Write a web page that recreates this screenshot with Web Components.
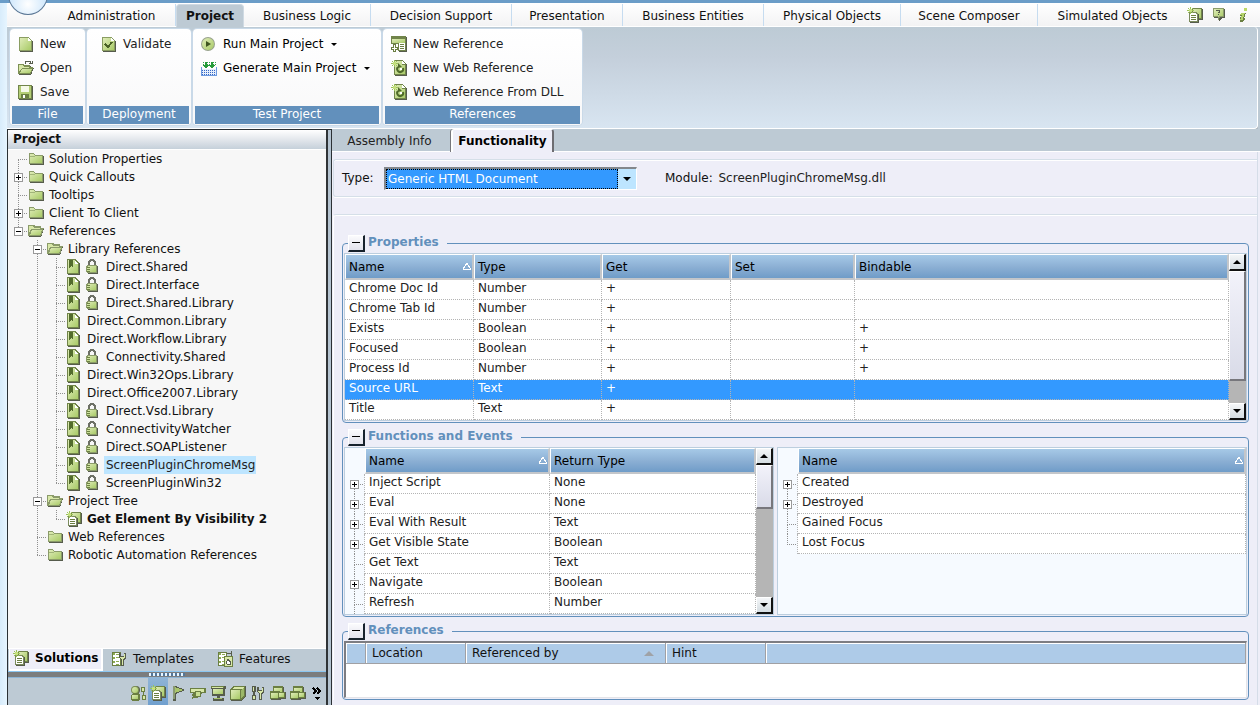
<!DOCTYPE html>
<html lang="en">
<head>
<meta charset="utf-8">
<title>Project designer</title>
<style>
    :root {
        --bar: #bdcad4;
        --blue: #6290bc;
        --pane: #eeeef8;
    }
    * { box-sizing: border-box; }
    body {
        margin: 0;
        min-height: 100vh;
        display: flex;
        flex-direction: column;
        padding-left: 7px;
        background: linear-gradient(90deg, #d8ecfb 0, #e6f5ff 7px, var(--bar) 7px);
        font: 12px/18px "DejaVu Sans", Verdana, sans-serif;
        color: #111;
    }
    header { display: flex; flex-direction: column; }
    .strip { height: 3px; margin-left: -7px; background: #6b9dc8; }
    .menu {
        display: flex;
        height: 24px;
        padding: 1px 12px 0 41px;
        background: linear-gradient(#fff, #f3f3f4);
        border-bottom: 1px solid #fff;
    }
    .menu .tools { flex: 1; display: flex; justify-content: flex-end; align-items: center; gap: 8px; }
    .orb {
        position: absolute;
        left: 8px;
        top: -26px;
        width: 40px;
        height: 41px;
        border-radius: 50%;
        border: 1px solid #5c7896;
        background: radial-gradient(circle at 50% 75%, #fff 0, #c9e4fb 60%, #9cc6ea 100%);
    }
    .ribbon {
        display: flex;
        gap: 2px;
        height: 102px;
        padding: 2px 3px;
        margin-right: 2px;
        border: solid #fff;
        border-width: 0 1px 1px 0;
        border-radius: 0 4px 4px 0;
        box-shadow: 0 1px #8d959c;
        background: linear-gradient(#bdcbd5, #c4cfdb 30%, #d8e5f1);
    }
    main { flex: 1; display: grid; grid-template-columns: 325px minmax(0, 1fr); }
    .side {
        display: flex;
        flex-direction: column;
        border: solid #2b3034;
        border-width: 1px 1px 0 1px;
        box-shadow: inset -3px 0 #b4c3d0, inset -5px 0 #2f3336;
        padding-right: 5px;
    }
    .side h2 {
        margin: 0;
        padding-left: 5px;
        font-size: 12px;
        line-height: 19px;
        border-bottom: 1px solid #fff;
        background: linear-gradient(#fff, #e3e7ec 50%, #c5d0da);
    }
    project-tree { flex: 1; }
    .side nav { display: flex; height: 23px; padding-left: 1px; border-top: 1px solid #fff; background: var(--bar); }
    .grip {
        display: flex;
        justify-content: center;
        height: 7px;
        border-top: 1px solid #8cc6f0;
        border-bottom: 1px solid #8cb4d6;
        background: #7b7d7e;
    }
    .grip i { width: 36px; height: 3px; margin-top: 1px; background: repeating-linear-gradient(90deg, #e6f5ff 0 2px, #55789a 2px 4px); }
    .toolbar { display: flex; justify-content: flex-end; height: 28px; background: var(--bar); }
    .work { display: flex; flex-direction: column; background: var(--pane); }
    .work nav { display: flex; height: 23px; background: var(--bar); border-bottom: 1px solid #fff; }
    .page { flex: 1; margin-left: 1px; margin-right: 2px; padding: 7px 0 6px; border-right: 1px solid #d5dde8; }
    .form {
        display: flex;
        align-items: center;
        height: 38px;
        padding-left: 8px;
        border: 1px solid #d5dfe8;
        border-right: 0;
        border-radius: 3px 0 0 3px;
        box-shadow: inset 0 1px #fff, 0 1px #fff;
    }
    .form p { margin: 0 0 0 28px; color: #222; }
    .form p b { font-weight: normal; color: #111; margin-right: 2px; }
    .sections {
        display: flex;
        flex-direction: column;
        gap: 5px;
        margin-top: 17px;
        padding: 19px 8px 0;
        border-top: 1px solid #d5dfe8;
        border-left: 1px solid #fff;
        box-shadow: inset 0 1px #fff;
        border-radius: 3px 0 0 0;
    }
    .split { display: grid; grid-template-columns: 430px minmax(0, 1fr); gap: 3px; }
</style>
</head>
<body>
<header>
    <div class="strip"></div>
    <div class="menu" role="tablist">
        <menu-tab style="--w:128px">Administration</menu-tab>
        <menu-tab style="--w:68px" active>Project</menu-tab>
        <menu-tab style="--w:127px">Business Logic</menu-tab>
        <menu-tab style="--w:141px">Decision Support</menu-tab>
        <menu-tab style="--w:111px">Presentation</menu-tab>
        <menu-tab style="--w:141px">Business Entities</menu-tab>
        <menu-tab style="--w:137px">Physical Objects</menu-tab>
        <menu-tab style="--w:137px">Scene Composer</menu-tab>
        <menu-tab style="--w:149px" last>Simulated Objects</menu-tab>
        <div class="tools">
            <line-icon name="solution"></line-icon>
            <line-icon name="help"></line-icon>
            <line-icon name="info"></line-icon>
        </div>
    </div>
    <div class="ribbon">
        <ribbon-group label="File" style="--w:75px">
            <ribbon-item icon="new">New</ribbon-item>
            <ribbon-item icon="open">Open</ribbon-item>
            <ribbon-item icon="save">Save</ribbon-item>
        </ribbon-group>
        <ribbon-group label="Deployment" style="--w:104px;--pad:12px">
            <ribbon-item icon="validate">Validate</ribbon-item>
        </ribbon-group>
        <ribbon-group label="Test Project" style="--w:188px">
            <ribbon-item icon="run" drop>Run Main Project</ribbon-item>
            <ribbon-item icon="generate" drop>Generate Main Project</ribbon-item>
        </ribbon-group>
        <ribbon-group label="References" style="--w:199px">
            <ribbon-item icon="newref">New Reference</ribbon-item>
            <ribbon-item icon="webref">New Web Reference</ribbon-item>
            <ribbon-item icon="webref">Web Reference From DLL</ribbon-item>
        </ribbon-group>
    </div>
</header>
<div class="orb"></div>
<main>
    <section class="side">
        <h2>Project</h2>
        <project-tree></project-tree>
        <nav>
            <pane-tab icon="solution" style="--w:94px" active>Solutions</pane-tab>
            <pane-tab icon="template" style="--w:106px">Templates</pane-tab>
            <pane-tab icon="feature" style="--w:106px">Features</pane-tab>
        </nav>
        <div class="grip"><i></i></div>
        <div class="toolbar">
            <tool-button icon="users" label="Users"></tool-button>
            <tool-button icon="solution" label="Solution" active></tool-button>
            <tool-button icon="flag" label="Flags"></tool-button>
            <tool-button icon="callout" label="Callouts"></tool-button>
            <tool-button icon="screen" label="Screens"></tool-button>
            <tool-button icon="box" label="Objects"></tool-button>
            <tool-button icon="wrench" label="Tools"></tool-button>
            <tool-button icon="stack" label="Windows"></tool-button>
            <tool-button icon="stack" label="Layers"></tool-button>
            <tool-button icon="more" label="More" narrow></tool-button>
        </div>
    </section>
    <section class="work">
        <nav>
            <doc-tab style="--w:119px">Assembly Info</doc-tab>
            <doc-tab style="--w:103px" active>Functionality</doc-tab>
        </nav>
        <div class="page">
            <div class="form">
                <type-select></type-select>
                <p><b>Module:</b> ScreenPluginChromeMsg.dll</p>
            </div>
            <div class="sections">
                <group-box label="Properties"><data-grid id="properties"></data-grid></group-box>
                <group-box label="Functions and Events">
                    <div class="split">
                        <data-grid id="functions"></data-grid>
                        <data-grid id="events"></data-grid>
                    </div>
                </group-box>
                <group-box label="References"><reference-list></reference-list></group-box>
            </div>
        </div>
    </section>
</main>

<script>
const D = '#6b7f42', G = '#a9c56a', L = '#d8e8a8', S = '#565c4c';

const star = `<path d="M3 0h1v2h-1zM3 5h1v2h-1zM0 3h2v1h-2zM5 3h2v1h-2zM1 1h1v1h-1zM5 1h1v1h-1zM1 5h1v1h-1zM5 5h1v1h-1z" fill="#9cc455"/><path d="M2 2h3v3h-3z" fill="#c5e07e"/>`;
const page = `<path d="M2 2h9l4 4v10H2z" fill="${S}"/><path d="M1 1h9l4 4v10H1z" fill="#8a9d62"/><path d="M2 2h8v3h3v9H2z" fill="url(#g)"/><path d="M10 2l3 3h-3z" fill="#fff"/>`;
const win = (x, y) => `<path d="M${x + 1} ${y + 1}h10v8h-10z" fill="${S}"/><path d="M${x} ${y}h10v8h-10z" fill="${D}"/><path d="M${x + 1} ${y + 2}h8v5h-8z" fill="url(#g)"/>`;
const sheet = `<path d="M1 1h9v14H1z" fill="${D}"/><path d="M2 2h7v12H2z" fill="#fff"/><path d="M2 2h2v2H2zM5 3h3v1H5zM2 6h2v2H2zM5 6h3v1H5zM2 10h2v2H2zM5 10h3v1H5zM5 13h3v1H5z" fill="#8dab52"/>`;
const spanner = x => `<path d="M${x} 2h2v3h3V2h2v5l-2 2v6h-3V9L${x} 7z" fill="${S}"/><path d="M${x + 1} 3v3h4V3h1v4l-2 1v6h-1V8l-2-1z" fill="${L}"/>`;

// 16x16 drawings, coloured with the shared green gradient
const ICONS = {
    folder: `<path d="M2 3h5l1 2h8v9H2z" fill="${S}"/><path d="M1 2h5l1 2h8v9H1z" fill="#8b9b6a"/><path d="M2 3h4l1 2h7v7H2z" fill="url(#g)"/><path d="M2 5.500h5" stroke="#a2b57a"/>`,
    folderopen: `<path d="M1 14V3h6l1 1h5v2h3l-3 8z" fill="${S}"/><path d="M0 13V2h6l1 1h6v2h3l-3 8z" fill="#8b9b6a"/><path d="M1 10V3h4l1 2h6v1H3z" fill="${L}"/><path d="M4 7h10l-2 5H2z" fill="url(#g)"/>`,
    library: `<path d="M2 1h8l4 4v11H2z" fill="${S}"/><path d="M1 0h8l4 4v11H1z" fill="#71844a"/><path d="M2 1h7v4h3v9H2z" fill="url(#g)"/><path d="M3 1h4v8L5 7 3 9z" fill="#526b2c"/><path d="M9 2l3 3H9z" fill="#fff"/>`,
    lock: `<path d="M4 7V3l2-2h2l2 2v4" fill="none" stroke="#6d7066" stroke-width="2"/><path d="M2 7l2-1h7l2 1v7l-1 1H3z" fill="${S}"/><path d="M2 6h9l1 1v6l-1 1H2l-1-1V7z" fill="#8b9b6a"/><path d="M3 7h7l1 1v4l-1 1H3l-1-1V8z" fill="url(#g)"/><path d="M2 8h3v1H2zM2 10h3v1H2zM2 12h3v1H2z" fill="#6d8343"/>`,
    solution: `<path d="M6 2h10v11H6z" fill="${S}"/><path d="M5 1h10v11H5z" fill="#71844a"/><path d="M6 2h8v9H6z" fill="url(#g)"/><path d="M3 6h7l2 2v8H3z" fill="${S}"/><path d="M2 5h7l2 2v8H2z" fill="#7a8a5c"/><path d="M3 6h6v1h1v7H3z" fill="#fff"/><path d="M4 8h5v1H4zM4 10h5v1H4zM4 12h5v1H4z" fill="${D}"/>${star}`,
    help: `<path d="M3 2h11v9h-3l-3 4v-4H3z" fill="${S}"/><path d="M2 1h11v9H9l-2 4v-4H2z" fill="#8b9b6a"/><path d="M3 2h9v7H8l-1 2V9H3z" fill="url(#g)"/><path d="M5 3h4v3H7V5h1V4H5zM7 7h1v1H7z" fill="${S}"/>`,
    info: `<path d="M9 1h3v3H9z" fill="#bcd968"/><path d="M6 6h5l-2 5h1v1l-3 3H5v-3l1-3H5z" fill="${D}"/><path d="M6 6h4l-2 5v2H5l2-5H5z" fill="#b4d36a"/>`,
    new: page,
    open: `<path d="M1 15V5h5l1 1h6v2h3l-3 7z" fill="${S}"/><path d="M0 14V4h5l1 1h6v2h3l-2 7z" fill="#7d9054"/><path d="M1 12V5h4l1 2h5v1H4z" fill="${L}"/><path d="M4 9h10l-2 4H2z" fill="url(#g)"/><path d="M7 3.500l1-2h4l1 2M11 3.500h3V1" fill="none" stroke="${S}"/>`,
    save: `<path d="M1 2h14v14H1z" fill="${S}"/><path d="M0 1h14v14H0z" fill="#71844a"/><path d="M1 2h12v12H1z" fill="#b3cd75"/><path d="M3 2h8v6H3z" fill="#f5f9e8"/><path d="M3 10h8v4H3z" fill="${D}"/><path d="M5 11h2v3H5z" fill="#fff"/>`,
    validate: `${page}<path d="M4 8l3 3 4-5" fill="none" stroke="#4a6126" stroke-width="2"/>`,
    run: `<g shape-rendering="auto"><circle cx="7" cy="8" r="7" fill="#98a28c"/><circle cx="7" cy="8" r="6" fill="url(#g)"/><path d="M5 5l5 3-5 3z" fill="#3f5420"/></g>`,
    generate: `<path d="M1 1h14v4H1z" fill="url(#d)"/><path d="M4 2h2v3h2l-3 4-3-4h2zM10 2h2v3h2l-3 4-3-4h2z" fill="#249a39"/><path d="M0 7h1v8h14V7h1v9H0z" fill="#6d9ae0"/><path d="M1 9h14v6H1z" fill="url(#e)"/>`,
    newref: `<path d="M1 1h15v15H8V8H1z" fill="${S}"/><path d="M0 0h15v15H7V8H0z" fill="#71844a"/><path d="M1 3h13v4H1z" fill="url(#g)"/><path d="M8 7h6v7H8z" fill="#fff"/><path d="M9 8h4v1H9zM9 10h4v1H9zM9 12h4v1H9z" fill="${D}"/><path d="M2 8h3v3h2v3H5v2H2v-2H0v-3h2z" fill="${D}"/><path d="M3 9h1v3h2v1H4v2H3v-2H1v-1h2z" fill="#fff"/>`,
    webref: `<path d="M4 1h8l4 4v11H4z" fill="${S}"/><path d="M3 0h8l4 4v11H3z" fill="#71844a"/><path d="M4 1h7v4h3v9H4z" fill="url(#g)"/><path d="M11 1l3 3h-3z" fill="#fff"/><g shape-rendering="auto"><path d="M7 7a3 3 0 1 0 5 1" fill="none" stroke="#4f6a2a" stroke-width="2"/><path d="M7 3v5l4-1z" fill="#4f6a2a"/><path d="M9 8h2v2H9z" fill="#fff"/></g>${star}`,
    template: `${sheet}${spanner(8)}`,
    feature: `${sheet}<path d="M7 5h9v11H7z" fill="${D}"/><path d="M8 6h7v9H8z" fill="${L}"/><path d="M11 7l3 4v2l-1 1h-3l-1-1v-2z" fill="${S}"/><path d="M11 9l2 3-1 1h-2v-1z" fill="#fff"/><path d="M10 2h4V0M14 2v3" fill="none" stroke="${S}"/>`,
    users: `<g shape-rendering="auto"><circle cx="6" cy="5" r="4" fill="${S}"/><circle cx="5" cy="5" r="4" fill="#7f9358"/><circle cx="5" cy="5" r="3" fill="url(#g)"/></g><path d="M1 10l2-2h5l2 2v4l-2 2H2l-1-2z" fill="${D}"/><path d="M2 10h6v4H2z" fill="url(#g)"/><path d="M11 2h4v5h-1v3h2v5h-4v-5h1V7h-2z" fill="${D}"/><path d="M12 3h2v3h-2zM13 11h2v3h-2z" fill="${L}"/>`,
    flag: `<path d="M3 1h3l9 4-9 4v7H3z" fill="${S}"/><path d="M3 1h2v13H3z" fill="#8a9a72"/><path d="M5 2l8 3-8 3z" fill="#a9c56a"/>`,
    callout: `<path d="M0 3h16v5h-4l-2 4-5 1-3-2 1-3H0z" fill="${D}"/><path d="M1 4h13v3H1z" fill="${L}"/><circle cx="8" cy="9" r="3" fill="#c8de93" stroke="${D}"/><path d="M2 13l4-2" stroke="${D}" stroke-width="2"/>`,
    screen: `<path d="M1 1h15v3h-1v7H2V4H1z" fill="${S}"/><path d="M1 1h13v2H1z" fill="${D}"/><path d="M2 2h11v1H2z" fill="${L}"/><path d="M3 4h10v5H3z" fill="url(#g)"/><path d="M7 10h3v3h4v3H3v-3h4z" fill="${S}"/><path d="M4 13h8v1H4z" fill="${G}"/>`,
    box: `<path d="M1 4l3-3h12v10l-4 5H1z" fill="${S}"/><path d="M0 4l4-3h11v10l-4 4H0z" fill="${D}"/><path d="M1 5h9v9H1z" fill="url(#g)"/><path d="M2 4l2-2h10l-2 2z" fill="${L}"/><path d="M11 5l3-3v8l-3 4z" fill="#9bb767"/>`,
    wrench: `<path d="M2 1h4v6H5v3h1v5H2v-5h1V7H2z" fill="${S}"/><path d="M3 2h1v4H3zM3 11h2v3H3z" fill="${L}"/>${spanner(7)}`,
    stack: `${win(3, 1)}${win(0, 6)}<path d="M8 7h8v7H8z" fill="${S}"/><path d="M8 7h7v6H8z" fill="${D}"/><path d="M9 8h5v4H9z" fill="url(#g)"/>`,
    more: `<path d="M4 3l3 3-3 3M8 3l3 3-3 3" fill="none" stroke="#000" stroke-width="2"/><path d="M5 12h6l-3 3z" fill="#000"/>`
};

class LineIcon extends HTMLElement {
    constructor() {
        super();
        this.attachShadow({ mode: 'open' });
    }

    connectedCallback() {
        this.shadowRoot.innerHTML = `
            <style>
                :host { display: block; width: 16px; height: 16px; flex: none; }
                svg { display: block; }
            </style>
            <svg width="16" height="16" viewBox="0 0 16 16" shape-rendering="crispEdges" aria-hidden="true">
                <defs>
                    <linearGradient id="g" x1="0" y1="0" x2="1" y2="1"><stop offset="0" stop-color="#dfecb8"/><stop offset="1" stop-color="#a8ca66"/></linearGradient>
                    <pattern id="d" width="2" height="2" patternUnits="userSpaceOnUse"><path d="M0 0h1v1H0z" fill="#35a04a"/></pattern>
                    <pattern id="e" width="2" height="2" patternUnits="userSpaceOnUse"><path d="M0 0h2v2H0z" fill="#e4eefc"/><path d="M1 0h1v1H1z" fill="#3566c4"/></pattern>
                </defs>
                ${ICONS[this.getAttribute('name')] || ''}
            </svg>
        `;
    }
}

class MenuTab extends HTMLElement {
    constructor() {
        super();
        this.attachShadow({ mode: 'open' });
        this.shadowRoot.innerHTML = `
            <style>
                :host { display: block; flex: 0 0 var(--w); }
                button {
                    box-sizing: border-box;
                    width: 100%;
                    height: 22px;
                    padding: 2px 0 0;
                    border: 0;
                    border-right: 1px solid #c6dcf0;
                    background: none;
                    font: inherit;
                    color: inherit;
                }
                :host([last]) button { border: 0; }
                :host([active]) button {
                    height: 23px;
                    padding: 0;
                    border: 1px solid #cfdae3;
                    border-bottom: 0;
                    border-radius: 4px 4px 0 0;
                    background: #bdcad4;
                    font-weight: bold;
                }
            </style>
            <button role="tab"><slot></slot></button>
        `;
    }
}

class RibbonGroup extends HTMLElement {
    constructor() {
        super();
        this.attachShadow({ mode: 'open' });
    }

    connectedCallback() {
        this.shadowRoot.innerHTML = `
            <style>
                :host {
                    box-sizing: border-box;
                    display: flex;
                    flex-direction: column;
                    flex: 0 0 var(--w);
                    height: 96px;
                    padding: 2px 2px 1px;
                    border-radius: 4px;
                    background: linear-gradient(#fff, #f8f8f9);
                    box-shadow: 0 0 0 1px #c9d9e8;
                }
                .items { flex: 1; padding: 1px 0 0 var(--pad, 6px); }
                footer { height: 18px; line-height: 16px; background: #6290bc; color: #fff; text-align: center; }
            </style>
            <div class="items"><slot></slot></div>
            <footer>${this.getAttribute('label')}</footer>
        `;
    }
}

class RibbonItem extends HTMLElement {
    constructor() {
        super();
        this.attachShadow({ mode: 'open' });
    }

    connectedCallback() {
        this.shadowRoot.innerHTML = `
            <style>
                :host { display: block; }
                button {
                    display: flex;
                    align-items: center;
                    gap: 6px;
                    height: 24px;
                    padding: 0;
                    border: 0;
                    background: none;
                    font: inherit;
                    color: #222;
                    white-space: nowrap;
                }
                i { display: none; border: 3px solid transparent; border-top-color: #000; border-bottom: 0; margin-left: 2px; }
                :host([drop]) i { display: block; }
                :host([drop]) button { color: #000; }
            </style>
            <button><line-icon name="${this.getAttribute('icon')}"></line-icon><slot></slot><i></i></button>
        `;
    }
}

// One square of the dotted connector lines: w x h, the trunk runs down x = 9
function guide(kind, w, h) {
    const plus = kind.includes('+'), minus = kind.includes('-');
    const up = /[|LT]/.test(kind);
    const down = /[|TF]/.test(kind);
    const arm = /[LTF]/.test(kind);
    const y = h / 2;
    let s = '';
    if (up) s += `<path d="M9.500 0V${y}"/>`;
    if (down) s += `<path d="M9.500 ${y + 1}V${h}"/>`;
    if (arm) s += `<path d="M9 ${y + 0.5}H${w}"/>`;
    let box = '';
    if (plus || minus) {
        box = `<path d="M5.500 ${y - 3.5}h8v8h-8z" fill="#fff" stroke="#999"/><path d="M7 ${y + 0.5}h5${plus ? `M9.500 ${y - 2}v5` : ''}" stroke="#000"/>`;
    }
    return `<svg width="${w}" height="${h}" shape-rendering="crispEdges" aria-hidden="true"><g stroke="#909090" stroke-dasharray="1 1" fill="none">${s}</g>${box}</svg>`;
}

class ProjectTree extends HTMLElement {
    constructor() {
        super();
        this.attachShadow({ mode: 'open' });
    }

    set rows(rows) {
        this.render(rows);
    }

    render(rows) {
        this.shadowRoot.innerHTML = `
            <style>
                :host { display: block; background: #f7f7f7; padding-left: 1px; }
                ul { list-style: none; margin: 0; padding: 0; }
                li { display: flex; height: 18px; white-space: nowrap; }
                svg { flex: none; }
                line-icon { margin: 1px 3px 0 0; }
                span { padding: 0 1px 0 2px; line-height: 18px; }
                .sel span { background: #bde5ff; color: #222; }
                .bold { font-weight: bold; }
            </style>
            <ul role="tree">${rows.map(([guides, icons, text, cls]) => `
                <li role="treeitem" class="${cls || ''}">${guides.split(' ').map(g => guide(g, 19, 18)).join('')}${icons.split(' ').map(i => `<line-icon name="${i}"></line-icon>`).join('')}<span>${text}</span></li>`).join('')}
            </ul>
        `;
    }
}

class PaneTab extends HTMLElement {
    constructor() {
        super();
        this.attachShadow({ mode: 'open' });
    }

    connectedCallback() {
        this.shadowRoot.innerHTML = `
            <style>
                :host { display: block; flex: 0 0 var(--w); }
                button {
                    box-sizing: border-box;
                    display: flex;
                    align-items: center;
                    gap: 6px;
                    width: 100%;
                    height: 19px;
                    padding: 0 0 0 8px;
                    border: 0;
                    background: none;
                    font: inherit;
                    color: #111;
                }
                :host([active]) button {
                    height: 22px;
                    padding: 0 0 2px 3px;
                    border: solid #fff;
                    border-width: 0 2px 2px 1px;
                    background: #eeeef8;
                    font-weight: bold;
                    color: #000;
                }
            </style>
            <button><line-icon name="${this.getAttribute('icon')}"></line-icon><slot></slot></button>
        `;
    }
}

class ToolButton extends HTMLElement {
    constructor() {
        super();
        this.attachShadow({ mode: 'open' });
    }

    connectedCallback() {
        this.shadowRoot.innerHTML = `
            <style>
                :host { display: block; flex: 0 0 20px; }
                :host([narrow]) { flex-basis: 18px; }
                button { display: grid; place-items: center; width: 100%; height: 100%; padding: 2px 0 0; border: 0; background: none; }
                :host([active]) button { background: linear-gradient(#8fb4d6, #6f9fce); }
            </style>
            <button aria-label="${this.getAttribute('label')}"><line-icon name="${this.getAttribute('icon')}"></line-icon></button>
        `;
    }
}

class DocTab extends HTMLElement {
    constructor() {
        super();
        this.attachShadow({ mode: 'open' });
        this.shadowRoot.innerHTML = `
            <style>
                :host { display: block; flex: 0 0 var(--w); }
                button {
                    box-sizing: border-box;
                    width: 100%;
                    height: 23px;
                    padding: 0 4px 0 0;
                    border: 0;
                    background: none;
                    font: inherit;
                    color: #222;
                }
                :host([active]) button {
                    padding: 0;
                    border: solid #fff;
                    border-width: 1px 2px 0 2px;
                    border-right-color: #6d6d72;
                    border-radius: 3px 3px 0 0;
                    box-shadow: -1px 0 #77777c;
                    background: #eeeef8;
                    font-weight: bold;
                    color: #000;
                }
            </style>
            <button role="tab"><slot></slot></button>
        `;
    }
}

class TypeSelect extends HTMLElement {
    constructor() {
        super();
        this.attachShadow({ mode: 'open' });
        this.shadowRoot.innerHTML = `
            <style>
                :host { display: flex; align-items: center; }
                label { width: 42px; }
                .box {
                    display: flex;
                    width: 253px;
                    height: 23px;
                    box-sizing: border-box;
                    border: 2px solid #fff;
                    border-top-color: #83878c;
                    border-left-color: #83878c;
                    border-right-width: 1px;
                    border-bottom-width: 1px;
                    background: #bde5ff;
                }
                select {
                    appearance: none;
                    flex: 1;
                    padding: 0 0 0 1px;
                    border: 1px dotted #000;
                    border-radius: 0;
                    background: #3399ff;
                    font: inherit;
                    color: #fff;
                    outline: 0;
                }
                i { align-self: center; margin: 0 5px; border: 4px solid transparent; border-top-color: #000; border-bottom: 0; }
            </style>
            <label for="type">Type:</label>
            <div class="box"><select id="type"><option>Generic HTML Document</option></select><i></i></div>
        `;
    }
}

class GroupBox extends HTMLElement {
    constructor() {
        super();
        this.attachShadow({ mode: 'open' });
    }

    connectedCallback() {
        const label = this.getAttribute('label');
        this.shadowRoot.innerHTML = `
            <style>
                :host { display: block; }
                fieldset { min-width: 0; margin: 0; padding: 1px; border: 1px solid #6290bc; border-radius: 4px; }
                legend { display: flex; align-items: center; gap: 3px; height: 18px; margin-left: 4px; padding: 0 8px 0 0; color: #6290bc; font-weight: bold; line-height: 16px; }
                span { height: 18px; }
                button {
                    box-sizing: border-box;
                    display: grid;
                    place-items: center;
                    width: 17px;
                    height: 17px;
                    padding: 0;
                    border: solid #fff;
                    border-width: 1px 2px 2px 1px;
                    border-right-color: #17222c;
                    border-bottom-color: #17222c;
                    background: linear-gradient(#fbfbfd, #e2e2ec);
                }
                i { display: block; height: 1px; width: 8px; background: #000; }
            </style>
            <fieldset>
                <legend><button aria-label="Collapse ${label}"><i></i></button><span>${label}</span></legend>
                <slot></slot>
            </fieldset>
        `;
    }
}

class ScrollStrip extends HTMLElement {
    constructor() {
        super();
        this.attachShadow({ mode: 'open' });
        this.shadowRoot.innerHTML = `
            <style>
                :host { display: flex; flex-direction: column; width: 17px; flex: none; background: #b5b5b5; }
                button {
                    box-sizing: border-box;
                    height: 17px;
                    padding: 0;
                    border: solid #fff;
                    border-width: 1px 2px 2px 1px;
                    border-right-color: #111;
                    border-bottom-color: #111;
                    background: linear-gradient(#f4f6f8, #d5dde2);
                    display: grid;
                    place-items: center;
                }
                .track { flex: 1; }
                .thumb {
                    box-sizing: border-box;
                    height: var(--thumb);
                    border: solid #fff;
                    border-width: 1px 2px 2px 1px;
                    border-right-color: #77777c;
                    border-bottom-color: #77777c;
                    background: linear-gradient(#f2f2fa, #d9dbe8);
                }
                i { border: 4px solid transparent; }
                .up { border-bottom-color: #000; border-top: 0; }
                .down { border-top-color: #000; border-bottom: 0; }
            </style>
            <button aria-label="Scroll up"><i class="up"></i></button>
            <div class="track"><div class="thumb"></div></div>
            <button aria-label="Scroll down"><i class="down"></i></button>
        `;
    }
}

class DataGrid extends HTMLElement {
    constructor() {
        super();
        this.attachShadow({ mode: 'open' });
    }

    set data(data) {
        this.render(data);
    }

    render({ columns, rows, guides, selected, thumb }) {
        const sort = `<svg width="9" height="9" shape-rendering="crispEdges"><path d="M1 7.500h8M8.500 7L5 1 1 7" fill="none" stroke="#fff"/></svg>`;
        this.shadowRoot.innerHTML = `
            <style>
                :host { display: flex; border: 1px solid #bccede; background: #f6faff; }
                .body { flex: 1; min-width: 0; }
                table { width: 100%; table-layout: fixed; border-spacing: 0; border-collapse: separate; }
                th, td { box-sizing: border-box; padding: 0; text-align: left; font-weight: normal; white-space: nowrap; overflow: hidden; }
                th {
                    height: 26px;
                    padding: 0 1px 0 3px;
                    border: solid #fff;
                    border-width: 1px 2px 2px 1px;
                    border-right-color: #c3c6ca;
                    border-bottom-color: #c3c6ca;
                    background: linear-gradient(#a6c9e7, #8aaed3 55%, #6f9cc8);
                    color: #000;
                }
                th span { display: flex; justify-content: space-between; align-items: center; }
                td {
                    height: 20px;
                    padding-left: 4px;
                    border: 0 dotted #b4b4b4;
                    border-width: 0 1px 1px 0;
                    background: #fff;
                    color: #222;
                    line-height: 17px;
                    vertical-align: top;
                }
                .gutter { width: 20px; padding: 0; border-bottom: 0; background: #f6faff; }
                th.gutter { border: 0; }
                .gutter svg { display: block; }
                .sel td { background: #3399ff; color: #fff; }
            </style>
            <div class="body">
                <table>
                    <thead><tr>${guides ? '<th class="gutter"></th>' : ''}${columns.map(([name, width], i) => `<th style="width:${width}"><span>${name}${i ? '' : sort}</span></th>`).join('')}</tr></thead>
                    <tbody>${rows.map((row, r) => `
                        <tr class="${r === selected ? 'sel' : ''}">${guides ? `<td class="gutter">${guide(guides[r], 19, 20)}</td>` : ''}${row.map(c => `<td>${c}</td>`).join('')}</tr>`).join('')}
                    </tbody>
                </table>
            </div>
            ${thumb ? `<scroll-strip style="--thumb:${thumb}"></scroll-strip>` : ''}
        `;
    }
}

class ReferenceList extends HTMLElement {
    constructor() {
        super();
        this.attachShadow({ mode: 'open' });
        this.shadowRoot.innerHTML = `
            <style>
                :host {
                    display: block;
                    box-sizing: border-box;
                    min-height: 57px;
                    border: 2px solid #e4e4e8;
                    border-top-color: #7d7d82;
                    border-left-color: #7d7d82;
                    border-right-width: 1px;
                    border-bottom-width: 1px;
                    background: #fff;
                }
                table { width: 100%; table-layout: fixed; border-spacing: 0; }
                th {
                    box-sizing: border-box;
                    height: 21px;
                    padding: 0 11px 0 6px;
                    border: solid #a0a0a4;
                    border-width: 0 1px 1px 0;
                    box-shadow: inset 1px 1px #fff;
                    background: #aecbe8;
                    font-weight: normal;
                    text-align: left;
                    line-height: 18px;
                }
                th span { display: flex; justify-content: space-between; align-items: center; }
                i { border: 5px solid transparent; border-bottom-color: #9fa2a6; border-top: 0; }
            </style>
            <table>
                <tr>
                    <th style="width:20px"></th>
                    <th style="width:100px">Location</th>
                    <th style="width:200px"><span>Referenced by<i></i></span></th>
                    <th style="width:100px">Hint</th>
                    <th></th>
                </tr>
            </table>
        `;
    }
}

customElements.define('line-icon', LineIcon);
customElements.define('menu-tab', MenuTab);
customElements.define('ribbon-group', RibbonGroup);
customElements.define('ribbon-item', RibbonItem);
customElements.define('project-tree', ProjectTree);
customElements.define('pane-tab', PaneTab);
customElements.define('tool-button', ToolButton);
customElements.define('doc-tab', DocTab);
customElements.define('type-select', TypeSelect);
customElements.define('group-box', GroupBox);
customElements.define('scroll-strip', ScrollStrip);
customElements.define('data-grid', DataGrid);
customElements.define('reference-list', ReferenceList);

// Guides per level: F first, T middle, L last, | passing trunk, . empty; +/- adds a box
document.querySelector('project-tree').rows = [
    ['F', 'folder', 'Solution Properties'],
    ['T+', 'folder', 'Quick Callouts'],
    ['T', 'folder', 'Tooltips'],
    ['T+', 'folder', 'Client To Client'],
    ['L-', 'folderopen', 'References'],
    ['. T-', 'folderopen', 'Library References'],
    ['. | T', 'library lock', 'Direct.Shared'],
    ['. | T', 'library lock', 'Direct.Interface'],
    ['. | T', 'library lock', 'Direct.Shared.Library'],
    ['. | T', 'library', 'Direct.Common.Library'],
    ['. | T', 'library', 'Direct.Workflow.Library'],
    ['. | T', 'library lock', 'Connectivity.Shared'],
    ['. | T', 'library', 'Direct.Win32Ops.Library'],
    ['. | T', 'library', 'Direct.Office2007.Library'],
    ['. | T', 'library lock', 'Direct.Vsd.Library'],
    ['. | T', 'library lock', 'ConnectivityWatcher'],
    ['. | T', 'library lock', 'Direct.SOAPListener'],
    ['. | T', 'library lock', 'ScreenPluginChromeMsg', 'sel'],
    ['. | L', 'library lock', 'ScreenPluginWin32'],
    ['. T-', 'folderopen', 'Project Tree'],
    ['. | L', 'solution', 'Get Element By Visibility 2', 'bold'],
    ['. T', 'folder', 'Web References'],
    ['. L', 'folder', 'Robotic Automation References']
];

document.querySelector('#properties').data = {
    columns: [['Name', '129px'], ['Type', '128px'], ['Get', '129px'], ['Set', '124px'], ['Bindable', 'auto']],
    rows: [
        ['Chrome Doc Id', 'Number', '+', '', ''],
        ['Chrome Tab Id', 'Number', '+', '', ''],
        ['Exists', 'Boolean', '+', '', '+'],
        ['Focused', 'Boolean', '+', '', '+'],
        ['Process Id', 'Number', '+', '', '+'],
        ['Source URL', 'Text', '+', '', ''],
        ['Title', 'Text', '+', '', '']
    ],
    selected: 5,
    thumb: '110px'
};

document.querySelector('#functions').data = {
    columns: [['Name', '185px'], ['Return Type', 'auto']],
    rows: [
        ['Inject Script', 'None'],
        ['Eval', 'None'],
        ['Eval With Result', 'Text'],
        ['Get Visible State', 'Boolean'],
        ['Get Text', 'Text'],
        ['Navigate', 'Boolean'],
        ['Refresh', 'Number']
    ],
    guides: ['F+', 'T+', 'T+', 'T+', 'T', 'T+', 'T'],
    thumb: '44px'
};

document.querySelector('#events').data = {
    columns: [['Name', 'auto']],
    rows: [['Created'], ['Destroyed'], ['Gained Focus'], ['Lost Focus']],
    guides: ['F+', 'T+', 'T', 'L']
};
</script>
</body>
</html>
